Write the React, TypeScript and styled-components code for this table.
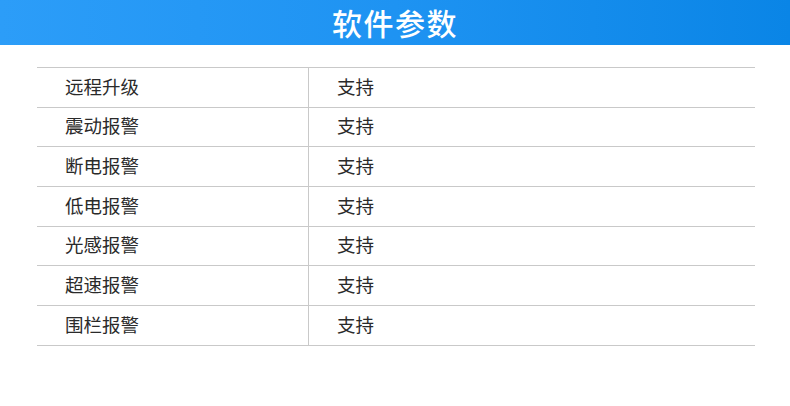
import React from "react";
import styled, { createGlobalStyle } from "styled-components";

const Global = createGlobalStyle`
  html, body { margin: 0; padding: 0; background: #fff; }
  body { font-family: "Noto Sans CJK SC", "Noto Sans", sans-serif; }
`;

const Page = styled.div`
  width: 790px;
  height: 406px;
  background: #fff;
  overflow: hidden;
`;

const Header = styled.div`
  height: 45px;
  display: flex;
  align-items: center;
  justify-content: center;
  background: linear-gradient(90deg, #2c9df8 0%, #1e93f2 50%, #0a85e6 100%);
`;

const Title = styled.h1`
  margin: 0;
  color: #fff;
  font-size: 30px;
  font-weight: 500;
  letter-spacing: 1.5px;
  line-height: 1;
  transform: translateY(-1px);
`;

const Table = styled.div`
  margin: 22px 35px 0 37px;
  border-bottom: 1px solid #c9c9c9;
`;

const Row = styled.div`
  display: grid;
  grid-template-columns: 271px 1fr;
  height: 39.7px;
  box-sizing: border-box;
  border-top: 1px solid #c9c9c9;
`;

const Cell = styled.div<{ $divider?: boolean }>`
  display: flex;
  align-items: center;
  padding-left: 28px;
  padding-bottom: 3px;
  border-left: ${(p) => (p.$divider ? "1px solid #c9c9c9" : "none")};
  font-size: 18.5px;
  font-weight: 400;
  color: #2a2a2a;
  line-height: 1;
`;

const rows = [
  ["远程升级", "支持"],
  ["震动报警", "支持"],
  ["断电报警", "支持"],
  ["低电报警", "支持"],
  ["光感报警", "支持"],
  ["超速报警", "支持"],
  ["围栏报警", "支持"],
];

export default function App() {
  return (
    <Page>
      <Global />
      <Header>
        <Title>软件参数</Title>
      </Header>
      <Table>
        {rows.map(([k, v]) => (
          <Row key={k}>
            <Cell>{k}</Cell>
            <Cell $divider>{v}</Cell>
          </Row>
        ))}
      </Table>
    </Page>
  );
}
